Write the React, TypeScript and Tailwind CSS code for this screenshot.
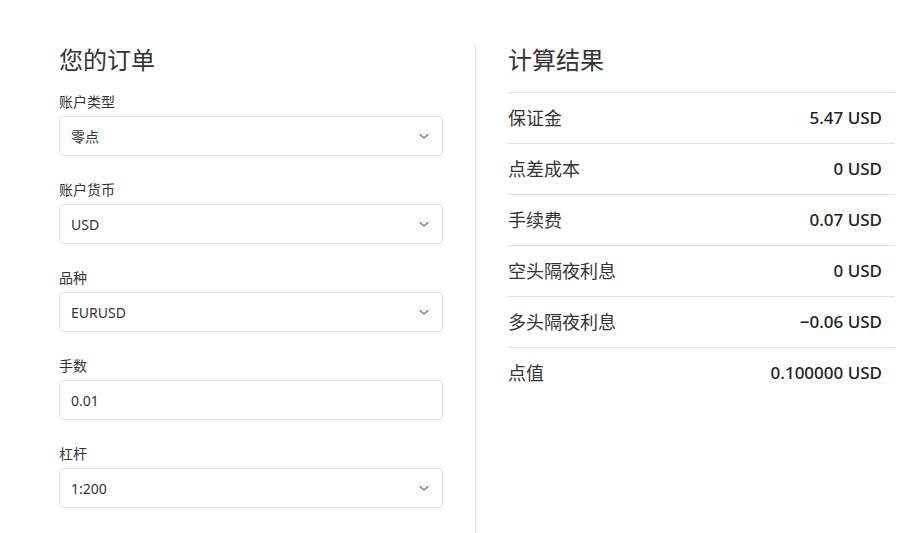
import React from "react";

const font = { fontFamily: '"Noto Sans", "Noto Sans CJK SC", sans-serif' };

function Chevron() {
  return (
    <svg width="12" height="12" viewBox="0 0 12 12" fill="none" className="text-[#777]">
      <path d="M2 4.5 L6 8 L10 4.5" stroke="currentColor" strokeWidth="1.2" strokeLinecap="round" strokeLinejoin="round" />
    </svg>
  );
}

function Field({ label, value, select = true }: { label: string; value: string; select?: boolean }) {
  return (
    <div className="flex flex-col">
      <div className="text-[14px] leading-5 text-[#333]">{label}</div>
      <div className="mt-1 flex h-10 items-center justify-between rounded border border-[#dee2e6] bg-white pl-[11px] pr-[12px] text-[14px] text-[#333]">
        <span>{value}</span>
        {select && <Chevron />}
      </div>
    </div>
  );
}

const rows: [string, string][] = [
  ["保证金", "5.47 USD"],
  ["点差成本", "0 USD"],
  ["手续费", "0.07 USD"],
  ["空头隔夜利息", "0 USD"],
  ["多头隔夜利息", "\u22120.06 USD"],
  ["点值", "0.100000 USD"],
];

export default function App() {
  return (
    <div style={font} className="min-h-[533px] w-[923px] bg-white">
      <div className="flex pl-[59px] pr-[28px] pt-[44px]">
        <div className="w-[384px] pb-[26px] pt-0">
          <h2 className="text-[24px] leading-8 text-[#333]">您的订单</h2>
          <div className="mt-4 flex flex-col gap-6">
            <Field label="账户类型" value="零点" />
            <Field label="账户货币" value="USD" />
            <Field label="品种" value="EURUSD" />
            <Field label="手数" value="0.01" select={false} />
            <Field label="杠杆" value="1:200" />
          </div>
        </div>
        <div className="ml-[32px] w-px bg-[#e3e3e3]" />
        <div className="ml-[32px] flex-1">
          <h2 className="text-[24px] leading-8 text-[#333]">计算结果</h2>
          <div className="mt-4">
            {rows.map(([k, v]) => (
              <div key={k} className="flex h-[51px] items-center justify-between border-t border-[#e3e3e3] pr-[13px]">
                <span className="text-[18px] text-[#333]">{k}</span>
                <span className="text-[17px] font-medium text-[#222]">{v}</span>
              </div>
            ))}
          </div>
        </div>
      </div>
    </div>
  );
}
